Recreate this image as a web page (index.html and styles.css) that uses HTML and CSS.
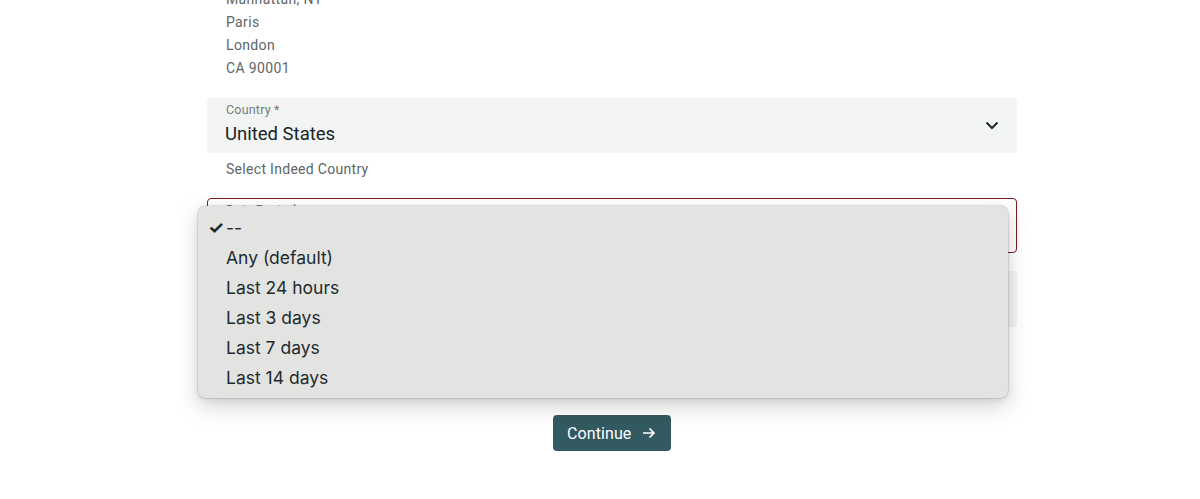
FILE: index.html
```html
<!DOCTYPE html>
<html lang="en">
<head>
<meta charset="utf-8">
<title>Search settings</title>
<link rel="stylesheet" href="styles.css">
</head>
<body>
<main class="page">
  <form class="form">
    <ul class="examples">
      <li>Manhattan, NY</li>
      <li>Paris</li>
      <li>London</li>
      <li>CA 90001</li>
    </ul>

    <div class="field filled">
      <span class="label">Country *</span>
      <span class="value">United States</span>
      <svg class="chevron" width="24" height="24" viewBox="0 0 24 24"><path d="M6.5 9.5 12 15l5.5-5.5" fill="none" stroke="#1b2a2e" stroke-width="2"/></svg>
    </div>
    <p class="helper">Select Indeed Country</p>

    <div class="select-wrap">
      <div class="field outlined">
        <span class="label">Date Posted</span>
        <span class="value">--</span>
      </div>

      <div class="field filled next">
        <span class="label">Job Type</span>
        <span class="value">Any</span>
      </div>
      <p class="helper right">Only show jobs of this type</p>

      <ul class="menu">
        <li class="selected"><span class="check">✓</span>--</li>
        <li>Any (default)</li>
        <li>Last 24 hours</li>
        <li>Last 3 days</li>
        <li>Last 7 days</li>
        <li>Last 14 days</li>
      </ul>
    </div>

    <div class="actions">
      <button type="button" class="continue">Continue
        <svg width="18" height="18" viewBox="0 0 18 18"><path d="M3 9h11M9.5 4.5 14 9l-4.5 4.5" fill="none" stroke="#fff" stroke-width="1.7"/></svg>
      </button>
    </div>
  </form>
</main>
</body>
</html>
```

FILE: styles.css
```css
* { box-sizing: border-box; }

html, body {
  margin: 0;
  padding: 0;
  background: #ffffff;
  overflow: hidden;
}

body {
  font-family: Roboto, "Liberation Sans", sans-serif;
  color: #1b2a2e;
}

.page {
  display: flex;
  justify-content: center;
  padding-left: 24px;
}

.form {
  width: 810px;
  display: flex;
  flex-direction: column;
  margin-top: -12px;
}

.examples {
  list-style: none;
  margin: 0;
  padding: 0 0 0 19px;
  font-size: 14px;
  line-height: 23px;
  letter-spacing: 0.35px;
  color: #5d6668;
}

.field {
  position: relative;
  height: 55px;
  border-radius: 4px;
  display: flex;
  flex-direction: column;
  padding: 5px 18px 0 18px;
}

.filled {
  background: #f3f5f4;
  margin-top: 18px;
}

.outlined {
  border: 1px solid #7a1b25;
  padding: 4px 17px 0 17px;
  margin-top: 19px;
}

.label {
  font-size: 12.5px;
  line-height: 14px;
  letter-spacing: 0.2px;
  color: #71797b;
  padding-left: 1px;
}

.value {
  font-size: 18.5px;
  line-height: 30px;
  margin-top: 2px;
  color: #142428;
}

.chevron {
  position: absolute;
  right: 13px;
  top: 15px;
}

.helper {
  margin: 6px 0 0 19px;
  font-size: 14px;
  line-height: 20px;
  letter-spacing: 0.3px;
  color: #5d6668;
}

.helper.right {
  text-align: right;
  margin: 5px 9px 0 19px;
  color: #335a60;
}

.select-wrap {
  position: relative;
}

.next {
  margin-top: 18px;
  height: 56px;
}

.menu {
  position: absolute;
  left: -9px;
  top: 27px;
  width: 810px;
  margin: 0;
  padding: 7px 0 5px;
  list-style: none;
  background: #e3e3e2;
  border-radius: 7px;
  box-shadow: 0 0 0 0.5px rgba(0, 0, 0, 0.18), 0 8px 22px rgba(0, 0, 0, 0.18), 0 2px 6px rgba(0, 0, 0, 0.08);
  font-family: Inter, "Liberation Sans", sans-serif;
  font-size: 17.5px;
  color: #1e2a2e;
}

.menu li {
  position: relative;
  height: 30px;
  line-height: 30px;
  padding-left: 28px;
}

.check {
  position: absolute;
  left: 10px;
  top: 0;
  font-size: 18px;
  font-weight: 700;
}

.actions {
  display: flex;
  justify-content: center;
  margin-top: 63px;
}

.continue {
  display: flex;
  align-items: center;
  gap: 9px;
  height: 36px;
  width: 118px;
  padding: 0 0 0 14px;
  border: none;
  border-radius: 4px;
  background: #335a60;
  color: #ffffff;
  font-family: Roboto, "Liberation Sans", sans-serif;
  font-size: 16px;
  letter-spacing: 0.1px;
}
```
